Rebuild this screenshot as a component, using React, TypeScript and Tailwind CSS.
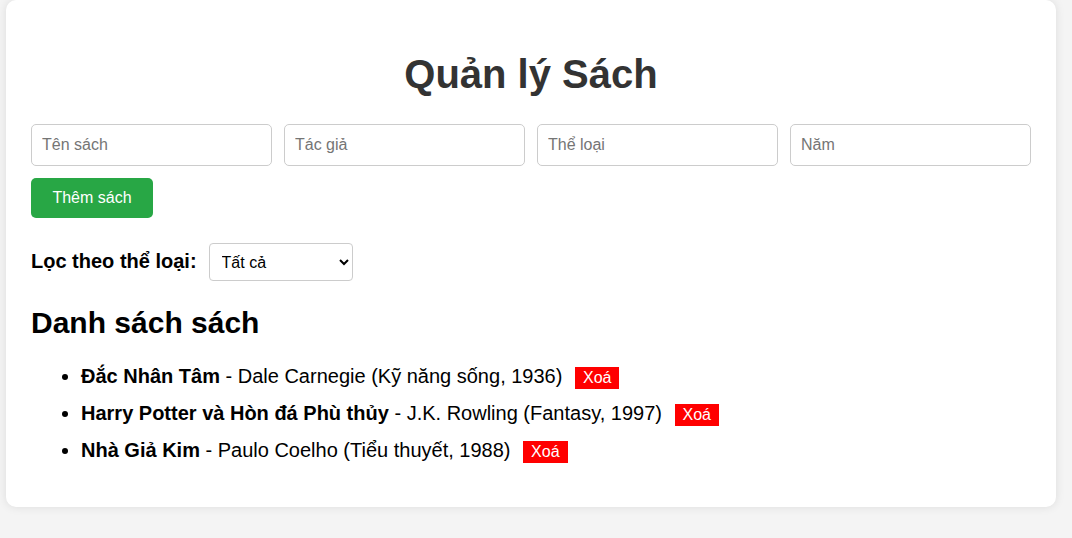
import { useState } from "react"

type Book = { title: string; author: string; genre: string; year: number }

const initialBooks: Book[] = [
  { title: "Đắc Nhân Tâm", author: "Dale Carnegie", genre: "Kỹ năng sống", year: 1936 },
  { title: "Harry Potter và Hòn đá Phù thủy", author: "J.K. Rowling", genre: "Fantasy", year: 1997 },
  { title: "Nhà Giả Kim", author: "Paulo Coelho", genre: "Tiểu thuyết", year: 1988 },
]

export default function App() {
  const [books, setBooks] = useState<Book[]>(initialBooks)
  const [filter, setFilter] = useState("all")

  const shown = filter === "all" ? books : books.filter((b) => b.genre === filter)

  return (
    <div className="min-h-screen bg-[#f4f4f4] font-['Liberation_Sans',Arial,sans-serif] text-black">
      <div className="ml-[6px] w-[1050px] bg-white rounded-[10px] shadow-[0_0_10px_rgba(0,0,0,0.1)] px-[25px] pt-[51px] pb-[38px]">
        <h1 className="text-[40px] leading-[46px] font-bold text-center text-[#333]">
          Quản lý Sách
        </h1>

        {/* Form */}
        <div className="mt-[27px] grid grid-cols-4 gap-3">
          {["Tên sách", "Tác giả", "Thể loại", "Năm"].map((p) => (
            <input
              key={p}
              type="text"
              placeholder={p}
              className="h-[42px] px-[10px] text-[16px] border border-[#ccc] rounded-[5px] placeholder:text-[#757575] focus:outline-none"
            />
          ))}
        </div>
        <button className="mt-3 w-[122px] h-[40px] bg-[#28a745] text-white text-[16px] rounded-[5px]">
          Thêm sách
        </button>

        {/* Filter */}
        <div className="mt-[25px] flex items-baseline gap-3">
          <label className="text-[20px] leading-[23px] font-bold">Lọc theo thể loại:</label>
          <select
            value={filter}
            onChange={(e) => setFilter(e.target.value)}
            className="w-[144px] h-[38px] pl-2 pr-1 text-[16px] bg-white border border-[#ccc] rounded-[4px]"
          >
            <option value="all">Tất cả</option>
            <option value="Kỹ năng sống">Kỹ năng sống</option>
            <option value="Fantasy">Fantasy</option>
            <option value="Tiểu thuyết">Tiểu thuyết</option>
          </select>
        </div>

        <h2 className="mt-[25px] text-[30px] leading-[34px] font-bold">Danh sách sách</h2>

        <ul className="mt-[18px] list-disc pl-[50px] text-[20px] leading-[37px]">
          {shown.map((b) => (
            <li key={b.title}>
              <b>{b.title}</b> - {b.author} ({b.genre}, {b.year}){" "}
              <button
                onClick={() => setBooks(books.filter((x) => x !== b))}
                className="ml-[7px] px-2 py-[2px] leading-[18px] text-[16px] bg-[#ff0000] text-white"
              >
                Xoá
              </button>
            </li>
          ))}
        </ul>
      </div>
    </div>
  )
}
